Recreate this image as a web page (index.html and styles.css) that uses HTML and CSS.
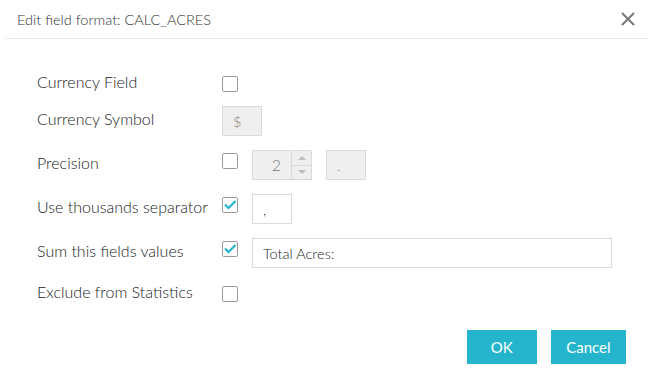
FILE: index.html
```html
<!DOCTYPE html>
<html lang="en">
  <head>
    <meta charset="UTF-8" />
    <meta name="viewport" content="width=device-width, initial-scale=1.0" />
    <title>Edit field format</title>
    <link rel="stylesheet" href="styles.css">
  </head>
  <body>
    <div class="dialog">
      <div class="dialog-header">
        <span class="dialog-title">Edit field format: CALC_ACRES</span>
        <button class="close-btn" title="Close">
          <svg width="14" height="14" viewBox="0 0 14 14">
            <path d="M1 1 L13 13 M13 1 L1 13" stroke="#777" stroke-width="2" fill="none" />
          </svg>
        </button>
      </div>

      <div class="dialog-body">
        <div class="row">
          <label class="field-label">Currency Field</label>
          <span class="checkbox"></span>
        </div>

        <div class="row tall">
          <label class="field-label">Currency Symbol</label>
          <input class="text-input small disabled" type="text" value="$" disabled />
        </div>

        <div class="row tall">
          <label class="field-label">Precision</label>
          <span class="checkbox"></span>
          <div class="number-input disabled">
            <span class="number-value">2</span>
            <span class="spinner">
              <span class="spin-btn"><span class="arrow-up"></span></span>
              <span class="spin-btn"><span class="arrow-down"></span></span>
            </span>
          </div>
          <input class="text-input small disabled" type="text" value="." disabled />
        </div>

        <div class="row tall">
          <label class="field-label">Use thousands separator</label>
          <span class="checkbox checked">
            <svg width="14" height="14" viewBox="0 0 14 14">
              <path d="M2 6.5 L5.5 10 L12.5 3" stroke="#24b5cc" stroke-width="2.2" fill="none" />
            </svg>
          </span>
          <input class="text-input small" type="text" value="," />
        </div>

        <div class="row tall">
          <label class="field-label">Sum this fields values</label>
          <span class="checkbox checked">
            <svg width="14" height="14" viewBox="0 0 14 14">
              <path d="M2 6.5 L5.5 10 L12.5 3" stroke="#24b5cc" stroke-width="2.2" fill="none" />
            </svg>
          </span>
          <input class="text-input wide" type="text" value="Total Acres:" />
        </div>

        <div class="row">
          <label class="field-label">Exclude from Statistics</label>
          <span class="checkbox"></span>
        </div>
      </div>

      <div class="dialog-footer">
        <button class="btn">OK</button>
        <button class="btn">Cancel</button>
      </div>
    </div>
  </body>
</html>
```

FILE: styles.css
```css
body {
  margin: 0;
  padding: 0;
  background-color: white;
  font-family: "Lato", "Open Sans", sans-serif;
  font-weight: 300;
  color: #222;
}
.dialog {
  width: 654px;
  height: 374px;
}
.dialog-header {
  display: flex;
  align-items: center;
  justify-content: space-between;
  height: 38px;
  margin: 0 5px;
  padding: 0 14px 0 12px;
  border-bottom: 1px solid #e3eaef;
}
.dialog-title {
  font-size: 14.5px;
  color: #333;
}
.close-btn {
  background: none;
  border: none;
  padding: 0;
  width: 14px;
  height: 14px;
  cursor: pointer;
}
.close-btn svg {
  display: block;
}
.dialog-body {
  display: flex;
  flex-direction: column;
  gap: 14px;
  padding: 33px 0 0 37px;
}
.row {
  display: flex;
  align-items: flex-start;
  gap: 14px;
}
.field-label {
  width: 171px;
  font-size: 16px;
  line-height: 20px;
  color: #222;
}
.row.tall .field-label {
  padding-top: 3px;
}
.checkbox {
  display: flex;
  align-items: center;
  justify-content: center;
  width: 16px;
  height: 16px;
  margin-top: 4px;
  box-sizing: border-box;
  border: 1px solid #9a9a9a;
  border-radius: 2px;
  background: white;
}
.row.tall .checkbox {
  margin-top: 3px;
}
.text-input {
  height: 30px;
  box-sizing: border-box;
  border: 1px solid #dadada;
  padding: 0 10px;
  font-family: inherit;
  font-weight: 300;
  font-size: 14.5px;
  color: #222;
  background: white;
  outline: none;
}
.text-input.small {
  width: 40px;
}
.text-input.wide {
  width: 360px;
}
.disabled {
  background-color: #efefef;
}
.text-input.disabled {
  color: #8c8078;
}
.number-input {
  display: flex;
  width: 60px;
  height: 30px;
  box-sizing: border-box;
  border: 1px solid #dadada;
}
.number-value {
  flex: 1;
  text-align: right;
  padding-right: 10px;
  font-size: 16px;
  line-height: 28px;
  color: #777;
}
.spinner {
  display: flex;
  flex-direction: column;
  width: 19px;
  border-left: 1px solid #dadada;
}
.spin-btn {
  flex: 1;
  display: flex;
  align-items: center;
  justify-content: center;
}
.spin-btn + .spin-btn {
  border-top: 1px solid #dadada;
}
.arrow-up,
.arrow-down {
  width: 0;
  height: 0;
  border-left: 4px solid transparent;
  border-right: 4px solid transparent;
}
.arrow-up {
  border-bottom: 4px solid #bdbdbd;
}
.arrow-down {
  border-top: 4px solid #bdbdbd;
}
.dialog-footer {
  display: flex;
  justify-content: flex-end;
  gap: 14px;
  padding: 28px 28px 0 0;
}
.btn {
  min-width: 70px;
  height: 34px;
  padding: 0 15.5px;
  border: none;
  background-color: #24b5cc;
  color: white;
  font-family: inherit;
  font-weight: 400;
  font-size: 15px;
  cursor: pointer;
}
```
